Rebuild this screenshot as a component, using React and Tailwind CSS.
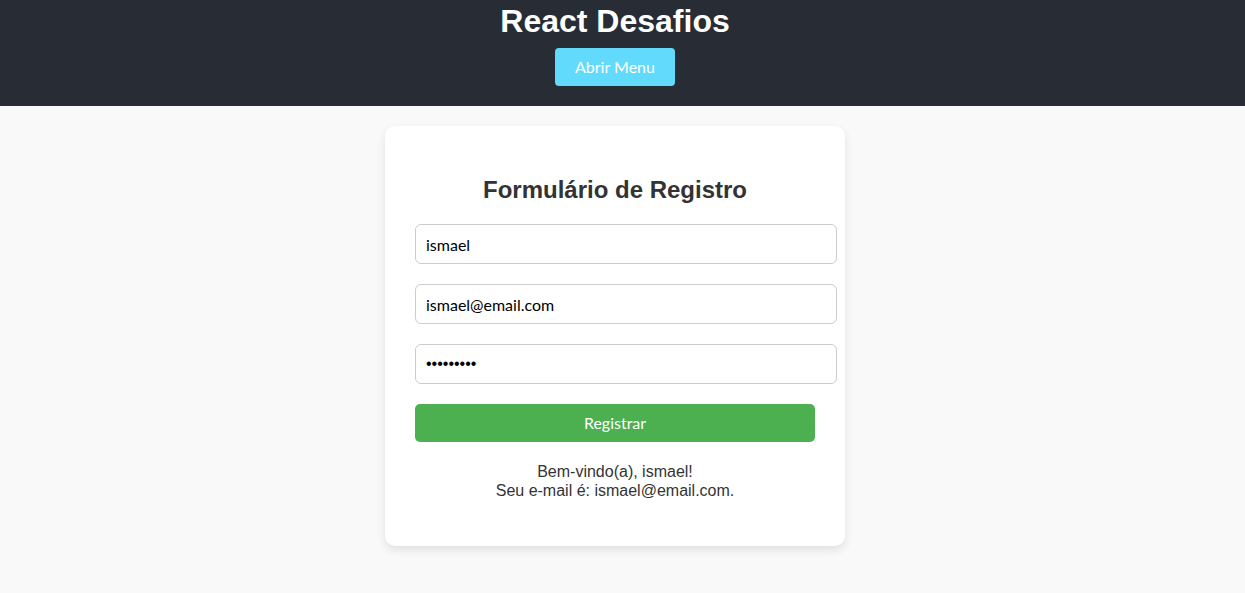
import React from "react";

export default function App() {
  return (
    <div className="min-h-screen bg-[#f9f9f9] font-['Liberation_Sans',Arial,sans-serif]">
      <header className="bg-[#282c34] pt-[3px] pb-[20px]">
        <div className="flex flex-col items-center pr-[15px]">
          <h1 className="text-[32px] font-bold text-white leading-[37px] m-0">React Desafios</h1>
          <button className="mt-[8px] w-[120px] h-[38px] rounded-[4px] bg-[#61dafb] text-white text-[16px] font-['Lato','Open_Sans',sans-serif]">
            Abrir Menu
          </button>
        </div>
      </header>
      <main className="flex justify-center pt-[20px] pr-[15px]">
        <div className="w-[460px] bg-white rounded-[10px] p-[30px] shadow-[0_4px_10px_rgba(0,0,0,0.1)] flex flex-col">
          <h2 className="text-[24px] font-bold text-[#333] text-center leading-[28px] my-[20px]">
            Formulário de Registro
          </h2>
          <input
            readOnly
            value="ismael"
            className="w-[422px] h-[40px] px-[10px] border border-[#ccc] rounded-[6px] text-[16px] text-black mb-[20px] outline-none font-['Lato','Open_Sans',sans-serif]"
          />
          <input
            readOnly
            value="ismael@email.com"
            className="w-[422px] h-[40px] px-[10px] border border-[#ccc] rounded-[6px] text-[16px] text-black mb-[20px] outline-none font-['Lato','Open_Sans',sans-serif]"
          />
          <input
            readOnly
            type="password"
            value="123456789"
            className="w-[422px] h-[40px] px-[10px] border border-[#ccc] rounded-[6px] text-[16px] text-black mb-[20px] outline-none font-['Liberation_Sans',Arial,sans-serif]"
          />
          <button className="w-[400px] h-[38px] rounded-[5px] bg-[#4caf50] text-white text-[16px] font-['Lato','Open_Sans',sans-serif]">
            Registrar
          </button>
          <p className="mt-[20px] mb-[16px] text-center text-[16px] leading-[19px] text-[#333]">
            Bem-vindo(a), ismael!
            <br />
            Seu e-mail é: ismael@email.com.
          </p>
        </div>
      </main>
    </div>
  );
}
